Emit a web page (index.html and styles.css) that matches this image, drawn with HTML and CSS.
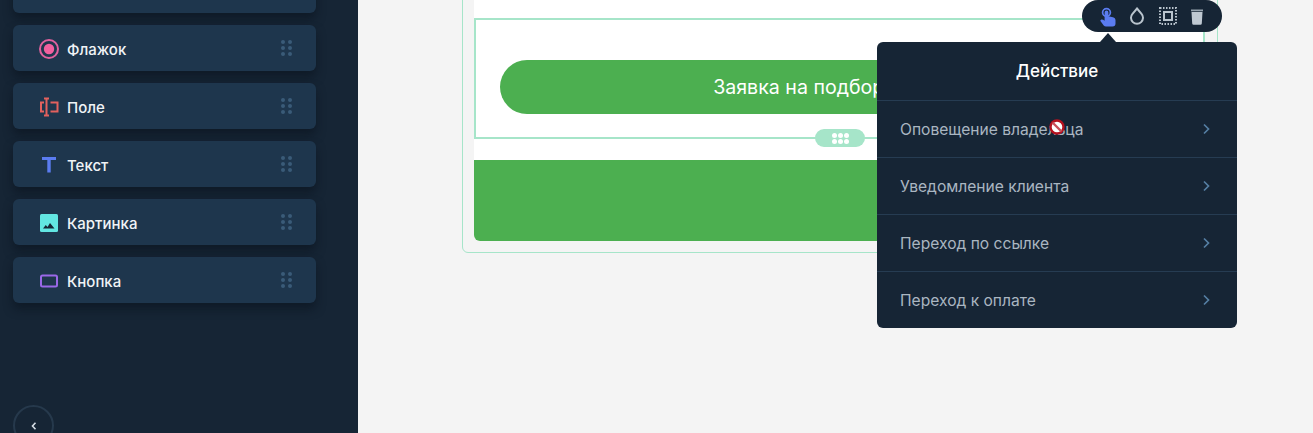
FILE: index.html
```html
<!DOCTYPE html>
<html lang="en">
<head>
  <meta charset="UTF-8">
  <title>Form editor</title>
  <link rel="stylesheet" href="styles.css">
</head>
<body>

  <!-- Left panel -->
  <aside class="sidebar">
    <div class="field-list">
      <div class="field-item"></div>
      <div class="field-item">
        <svg class="field-icon" viewBox="0 0 20 20"><circle cx="10" cy="10" r="9" fill="none" stroke="#e0619e" stroke-width="2"/><circle cx="10" cy="10" r="5.200" fill="#f2609f"/></svg>
        <span class="field-name">Флажок</span>
        <span class="grip"><i></i><i></i><i></i><i></i><i></i><i></i></span>
      </div>
      <div class="field-item">
        <svg class="field-icon" viewBox="0 0 20 20"><path d="M5 5.500H2v9h3M11.500 5.500H18.500v9h-7M5 1.500h5M5 18.500h5M7.500 1.500v17" fill="none" stroke="#e2615e" stroke-width="2"/></svg>
        <span class="field-name">Поле</span>
        <span class="grip"><i></i><i></i><i></i><i></i><i></i><i></i></span>
      </div>
      <div class="field-item">
        <svg class="field-icon" viewBox="0 0 20 20"><path d="M3 2h14v3h-5.300v12.500H8.300V5H3z" fill="#5b7cf0"/></svg>
        <span class="field-name">Текст</span>
        <span class="grip"><i></i><i></i><i></i><i></i><i></i><i></i></span>
      </div>
      <div class="field-item">
        <svg class="field-icon" viewBox="0 0 20 20"><rect x="1" y="1" width="18" height="18" rx="1.500" fill="#62e6e2"/><path d="M4 15.500l2.800-3.500 1.700 2 2.500-4 4.500 5.500z" fill="#162535"/></svg>
        <span class="field-name">Картинка</span>
        <span class="grip"><i></i><i></i><i></i><i></i><i></i><i></i></span>
      </div>
      <div class="field-item">
        <svg class="field-icon" viewBox="0 0 20 20"><rect x="2" y="4.500" width="16" height="11" rx="1.500" fill="none" stroke="#9a68e8" stroke-width="2"/></svg>
        <span class="field-name">Кнопка</span>
        <span class="grip"><i></i><i></i><i></i><i></i><i></i><i></i></span>
      </div>
    </div>
    <button class="collapse-btn">
      <svg viewBox="0 0 10 10" width="10" height="10"><path d="M6.500 1.800L3.500 5l3 3.200" fill="none" stroke="#d5dde5" stroke-width="1.600"/></svg>
    </button>
  </aside>

  <!-- Canvas -->
  <main class="canvas">
    <div class="form-frame">
      <div class="form-card">
        <div class="form-block">
          <div class="submit-btn">Заявка на подбор путёвки</div>
          <span class="block-handle"><i></i><i></i><i></i><i></i><i></i><i></i></span>
        </div>
        <div class="form-footer"></div>
      </div>
    </div>

    <div class="toolbar">
      <svg viewBox="0 0 16 21" width="16" height="21"><path d="M4.600 6.500a1.900 1.900 0 0 1 3.800 0v3.800l4.600 1c1.500.4 2.500 1.500 2.500 2.900v3.300a3 3 0 0 1-3 3H6c-1 0-1.700-.4-2.300-1.100L.6 15.200c-.4-.6-.2-1.300.5-1.500.9-.3 2.400.2 3.500 1z" fill="#5b7cf0"/><circle cx="6.500" cy="6.500" r="3.900" fill="none" stroke="#5b7cf0" stroke-width="1.700"/></svg>
      <svg viewBox="0 0 16 18" width="16" height="18"><path d="M8 1.500l4.500 5.300a6 6 0 1 1-9 0z" fill="none" stroke="#b9c4cd" stroke-width="2"/></svg>
      <svg viewBox="0 0 18 18" width="18" height="18"><rect x="1" y="1" width="16" height="16" fill="none" stroke="#b9c4cd" stroke-width="2" stroke-dasharray="1.500 1.500"/><rect x="5" y="5" width="8" height="8" fill="none" stroke="#b9c4cd" stroke-width="2"/></svg>
      <svg viewBox="0 0 14 17" width="14" height="17"><path d="M1 1.500h12v1.800H1z" fill="#97a4af"/><path d="M1.500 4h11l-.7 11.500a1.400 1.400 0 0 1-1.400 1.300H3.600a1.400 1.400 0 0 1-1.400-1.300z" fill="#bfc9d2"/></svg>
    </div>

    <div class="action-menu">
      <h4>Действие</h4>
      <div class="action-row">Оповещение владельца<svg viewBox="0 0 10 12" width="10" height="12"><path d="M3 1.500L7.500 6 3 10.500" fill="none" stroke="#557fa3" stroke-width="1.700"/></svg></div>
      <div class="action-row">Уведомление клиента<svg viewBox="0 0 10 12" width="10" height="12"><path d="M3 1.500L7.500 6 3 10.500" fill="none" stroke="#557fa3" stroke-width="1.700"/></svg></div>
      <div class="action-row">Переход по ссылке<svg viewBox="0 0 10 12" width="10" height="12"><path d="M3 1.500L7.500 6 3 10.500" fill="none" stroke="#557fa3" stroke-width="1.700"/></svg></div>
      <div class="action-row">Переход к оплате<svg viewBox="0 0 10 12" width="10" height="12"><path d="M3 1.500L7.500 6 3 10.500" fill="none" stroke="#557fa3" stroke-width="1.700"/></svg></div>
    </div>

    <!-- not-allowed cursor -->
    <svg class="cursor" viewBox="0 0 18 18" width="18" height="18"><circle cx="9" cy="9" r="6.500" fill="#fff" stroke="#b5121f" stroke-width="2.400"/><path d="M4.500 4.500l9 9" stroke="#c8505a" stroke-width="2.400"/></svg>
  </main>

</body>
</html>
```

FILE: styles.css
```css
html, body {
  margin: 0;
  height: 100%;
}

body {
  display: flex;
  overflow: hidden;
  background-color: #f4f4f4;
  font-family: Inter, "Noto Sans", sans-serif;
}

.sidebar {
  width: 358px;
  flex-shrink: 0;
  display: flex;
  flex-direction: column;
  background-color: #162535;
}

.field-list {
  display: flex;
  flex-direction: column;
  gap: 12px;
  margin: -33px 42px 0 13px;
}

.field-item {
  height: 46px;
  box-sizing: border-box;
  display: flex;
  align-items: center;
  padding: 2px 24px 0 26px;
  background-color: #1e364d;
  border-radius: 6px;
  box-shadow: 0 6px 10px rgba(8, 16, 26, 0.5);
}

.field-icon {
  width: 20px;
  height: 20px;
  flex-shrink: 0;
  margin-right: 8px;
}

.field-name {
  flex: 1;
  font-size: 15px;
  font-weight: 500;
  color: #f0f3f6;
}

.grip {
  display: grid;
  grid-template-columns: 4px 4px;
  gap: 2px 3px;
  margin-top: -2px;
}

.grip i {
  width: 4px;
  height: 4px;
  border-radius: 50%;
  background-color: #3a5b78;
}

.collapse-btn {
  width: 41px;
  height: 41px;
  flex-shrink: 0;
  margin: auto 0 -13px 13px;
  padding: 0;
  display: flex;
  align-items: center;
  justify-content: center;
  background: none;
  border: 2px solid #26394c;
  border-radius: 50%;
}

.canvas {
  flex: 1;
  position: relative;
  overflow: hidden;
}

.form-frame {
  width: 756px;
  height: 274px;
  box-sizing: border-box;
  margin: -21px 0 0 104px;
  padding: 0 12px 11px 11px;
  border: 1px solid #a6e5c9;
  border-radius: 6px;
}

.form-card {
  height: 100%;
  background-color: #fff;
  padding-top: 38px;
  box-sizing: border-box;
  display: flex;
  flex-direction: column;
  border-radius: 0 0 6px 6px;
}

.form-block {
  position: relative;
  height: 121px;
  box-sizing: border-box;
  padding: 40px 24px 0;
  border: 2px solid #a6e5c9;
}

.submit-btn {
  height: 54px;
  line-height: 54px;
  text-align: center;
  font-size: 19.600px;
  color: #fff;
  white-space: nowrap;
  background-color: #4caf50;
  border-radius: 27px;
}

.block-handle {
  position: absolute;
  left: 50%;
  bottom: -10px;
  width: 50px;
  height: 18px;
  margin-left: -25px;
  box-sizing: border-box;
  padding: 4px 0 0 17px;
  display: grid;
  grid-template-columns: repeat(3, 5px);
  grid-auto-rows: 5px;
  gap: 1px;
  background-color: #a6e5c9;
  border-radius: 9px;
}

.block-handle i {
  background-color: #fff;
  border-radius: 50%;
}

.form-footer {
  height: 81px;
  margin-top: 21px;
  background-color: #4caf50;
  border-radius: 0 0 6px 6px;
}

.toolbar {
  position: absolute;
  top: 0;
  left: 724px;
  width: 140px;
  height: 32px;
  box-sizing: border-box;
  padding: 0 18px;
  display: flex;
  align-items: center;
  justify-content: space-between;
  background-color: #162535;
  border-radius: 16px;
}

.toolbar::after {
  content: "";
  position: absolute;
  left: 18px;
  top: 33px;
  border: 8px solid transparent;
  border-top: 0;
  border-bottom: 9px solid #162535;
}

.action-menu {
  position: absolute;
  top: 42px;
  left: 519px;
  width: 360px;
  background-color: #162535;
  border-radius: 6px;
}

.action-menu h4 {
  margin: 0;
  height: 58px;
  line-height: 58px;
  text-align: center;
  font-size: 17px;
  font-weight: 500;
  color: #fff;
}

.action-row {
  height: 57px;
  box-sizing: border-box;
  padding: 0 26px 0 23px;
  display: flex;
  align-items: center;
  justify-content: space-between;
  border-top: 1px solid #263c52;
  font-size: 15.600px;
  color: #aab6c1;
}

.cursor {
  position: absolute;
  top: 118px;
  left: 690px;
}
```
